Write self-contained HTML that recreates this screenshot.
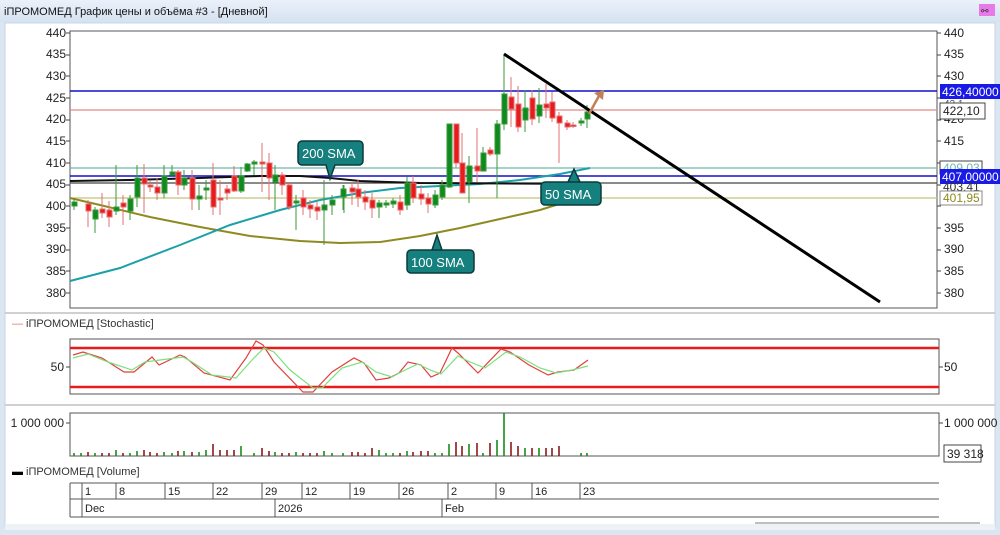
<!DOCTYPE html>
<html><head><meta charset="utf-8"><style>
html,body{margin:0;padding:0;width:1000px;height:535px;overflow:hidden;background:#fff;font-family:"Liberation Sans","Noto Sans CJK SC",sans-serif}
svg{display:block}
text{font-family:"Liberation Sans","Noto Sans CJK SC",sans-serif}
</style></head><body>
<svg width="1000" height="535" viewBox="0 0 1000 535">
<defs><linearGradient id="tb" x1="0" y1="0" x2="0" y2="1"><stop offset="0" stop-color="#eaf1fa"/><stop offset="1" stop-color="#d5e2f1"/></linearGradient></defs>
<rect x="0" y="0" width="1000" height="535" fill="#dbe6f3"/>
<rect x="0" y="0" width="1000" height="22" fill="url(#tb)"/>
<text x="4" y="15" font-size="11" fill="#111">iПРОМОМЕД График цены и объёма #3 - [Дневной]</text>
<rect x="979" y="4" width="16" height="12" fill="#e879e8"/>
<text x="981" y="14" font-size="9" fill="#333">⚯</text>
<rect x="5" y="23" width="990" height="503" fill="#fff" stroke="#c8d4e2"/>
<rect x="5" y="524" width="990" height="6" fill="#eef2f7"/>
<line x1="755" y1="523" x2="980" y2="523" stroke="#aaa" stroke-width="1.5"/>
<line x1="5" y1="313" x2="995" y2="313" stroke="#d0d0d0" stroke-width="2"/>
<line x1="5" y1="405" x2="995" y2="405" stroke="#d0d0d0" stroke-width="2"/>

<rect x="70" y="31" width="867" height="277" fill="#fff" stroke="#555"/>
<g font-size="12" fill="#222" text-anchor="end">
<text x="66" y="37">440</text><text x="66" y="58">435</text><text x="66" y="80">430</text><text x="66" y="102">425</text><text x="66" y="123">420</text><text x="66" y="145">415</text><text x="66" y="167">410</text><text x="66" y="188">405</text><text x="66" y="210">400</text><text x="66" y="232">395</text><text x="66" y="253">390</text><text x="66" y="275">385</text><text x="66" y="297">380</text>
</g>
<g stroke="#444">
<path d="M66,33H70M66,55H70M66,76H70M66,98H70M66,120H70M66,141H70M66,163H70M66,185H70M66,206H70M66,228H70M66,250H70M66,271H70M66,293H70"/>
<path d="M937,33H941M937,55H941M937,76H941M937,98H941M937,120H941M937,141H941M937,163H941M937,185H941M937,206H941M937,228H941M937,250H941M937,271H941M937,293H941"/>
</g>
<g font-size="12" fill="#222">
<text x="944" y="37">440</text><text x="944" y="58">435</text><text x="944" y="80">430</text><text x="944" y="123">420</text><text x="944" y="145">415</text><text x="944" y="232">395</text><text x="944" y="253">390</text><text x="944" y="275">385</text><text x="944" y="297">380</text>
</g>

<line x1="70" y1="110" x2="937" y2="110" stroke="#e08a8a" stroke-width="1.2"/>
<line x1="70" y1="168" x2="937" y2="168" stroke="#6fb8aa" stroke-width="1.2"/>
<line x1="70" y1="183" x2="937" y2="183" stroke="#444" stroke-width="1.2"/>
<line x1="70" y1="198" x2="937" y2="198" stroke="#c2c27a" stroke-width="1.2"/>
<line x1="70" y1="91" x2="937" y2="91" stroke="#1010c8" stroke-width="1.6"/>
<line x1="70" y1="176" x2="937" y2="176" stroke="#1010c8" stroke-width="1.6"/>

<path d="M70,198 L100,205 L150,217 L200,227 L250,236 L300,241 L340,243 L380,242 L420,236 L460,228 L500,219 L540,210 L575,199" fill="none" stroke="#8f8a20" stroke-width="2"/>
<path d="M70,281 L120,268 L180,245 L230,225 L280,210 L320,200 L360,193 L400,188 L440,186 L480,184 L520,180 L560,174 L590,168" fill="none" stroke="#1ba0a8" stroke-width="2"/>
<path d="M70,181 L130,180 L200,178 L260,176 L300,176 L330,178 L360,181 L420,183 L600,184" fill="none" stroke="#111" stroke-width="2"/>

<g stroke-width="1">
<g stroke="#3a9a3a" fill="#0f8a1f">
<path d="M74,198V210M95,207V233M116,165V215M130,195V220M137,165V207M164,165V198M172,165V175M184,170V190M199,185V210M206,180V200M241,167V193M247,163V172M254,160V175M275,165V210M296,195V230M324,180V245M332,195V215M343,185V210M344,185V213M379,200V218M386,200V208M393,198V208M407,177V210M435,190V208M442,180V200M449,124V188M469,156V203M483,147V171M497,120V198M504,54V130M525,90V132M539,88V123M581,118V126M587,105V128"/>
<rect x="72" y="202" width="5" height="4"/><rect x="93" y="210" width="5" height="9"/><rect x="114" y="207" width="5" height="4"/><rect x="128" y="199" width="5" height="12"/><rect x="135" y="178" width="5" height="19"/><rect x="162" y="176" width="5" height="17"/><rect x="170" y="172" width="5" height="3"/><rect x="182" y="178" width="5" height="7"/><rect x="197" y="196" width="5" height="3"/><rect x="204" y="188" width="5" height="2"/><rect x="239" y="176" width="5" height="15"/><rect x="245" y="164" width="5" height="7"/><rect x="252" y="162" width="5" height="2"/><rect x="273" y="175" width="5" height="7"/><rect x="294" y="201" width="5" height="2"/><rect x="322" y="205" width="5" height="5"/><rect x="330" y="200" width="5" height="5"/><rect x="341" y="189" width="5" height="8"/><rect x="377" y="203" width="5" height="4"/><rect x="384" y="203" width="5" height="2"/><rect x="391" y="201" width="5" height="3"/><rect x="405" y="183" width="5" height="22"/><rect x="433" y="195" width="5" height="10"/><rect x="440" y="185" width="5" height="12"/><rect x="447" y="124" width="5" height="63"/><rect x="467" y="166" width="5" height="16"/><rect x="481" y="153" width="5" height="18"/><rect x="495" y="124" width="5" height="30"/><rect x="502" y="94" width="5" height="30"/><rect x="523" y="108" width="5" height="12"/><rect x="537" y="105" width="5" height="11"/><rect x="579" y="121" width="5" height="2"/><rect x="585" y="112" width="5" height="7"/>
</g>
<g stroke="#e07070" fill="#e81c1c">
<path d="M88,200V227M102,193V218M109,201V227M123,195V225M144,164V213M150,180V192M157,178V200M178,170V195M192,170V210M213,163V215M220,180V215M227,185V200M234,166V192M262,143V192M269,153V200M282,172V195M289,183V210M303,190V215M310,200V218M317,202V220M352,182V205M358,180V207M365,190V210M372,193V218M400,195V215M413,176V203M421,185V205M428,193V213M456,124V168M462,133V193M477,128V182M490,147V156M511,77V127M518,86V132M532,90V125M546,84V118M552,92V122M559,112V163M567,120V130M573,122V128"/>
<rect x="86" y="204" width="5" height="7"/><rect x="100" y="209" width="5" height="4"/><rect x="107" y="210" width="5" height="7"/><rect x="121" y="203" width="5" height="4"/><rect x="142" y="178" width="5" height="6"/><rect x="148" y="185" width="5" height="2"/><rect x="155" y="187" width="5" height="6"/><rect x="176" y="172" width="5" height="13"/><rect x="190" y="178" width="5" height="21"/><rect x="211" y="180" width="5" height="27"/><rect x="218" y="198" width="5" height="2"/><rect x="225" y="189" width="5" height="4"/><rect x="232" y="176" width="5" height="15"/><rect x="260" y="162" width="5" height="2"/><rect x="267" y="163" width="5" height="15"/><rect x="280" y="175" width="5" height="10"/><rect x="287" y="185" width="5" height="22"/><rect x="301" y="198" width="5" height="9"/><rect x="308" y="205" width="5" height="4"/><rect x="315" y="207" width="5" height="4"/><rect x="350" y="188" width="5" height="4"/><rect x="356" y="189" width="5" height="8"/><rect x="363" y="197" width="5" height="5"/><rect x="370" y="200" width="5" height="8"/><rect x="398" y="202" width="5" height="8"/><rect x="411" y="183" width="5" height="15"/><rect x="419" y="194" width="5" height="5"/><rect x="426" y="198" width="5" height="6"/><rect x="454" y="124" width="5" height="39"/><rect x="460" y="163" width="5" height="30"/><rect x="475" y="166" width="5" height="5"/><rect x="488" y="150" width="5" height="4"/><rect x="509" y="97" width="5" height="12"/><rect x="516" y="104" width="5" height="23"/><rect x="530" y="98" width="5" height="21"/><rect x="544" y="104" width="5" height="4"/><rect x="550" y="102" width="5" height="16"/><rect x="557" y="116" width="5" height="7"/><rect x="565" y="123" width="5" height="4"/><rect x="571" y="125" width="5" height="1.5"/>
</g>
</g>

<line x1="504" y1="54" x2="880" y2="302" stroke="#000" stroke-width="3"/>
<path d="M589,114 L600,94" stroke="#c0805a" stroke-width="2.5" fill="none"/>
<path d="M594,93 L604,90 L603,100 Z" fill="#c0805a"/>

<g font-size="13" fill="#fff">
<path d="M302,141 H359 a4,4 0 0 1 4,4 V161 a4,4 0 0 1 -4,4 H335 L330,179 L326,165 H302 a4,4 0 0 1 -4,-4 V145 a4,4 0 0 1 4,-4Z" fill="#16807e" stroke="#0b3b3b" stroke-width="1.5"/>
<text x="302" y="158">200 SMA</text>
<path d="M411,250 H470 a4,4 0 0 1 4,4 V269 a4,4 0 0 1 -4,4 H411 a4,4 0 0 1 -4,-4 V254 a4,4 0 0 1 4,-4 H432 L437,235 L442,250Z" fill="#16807e" stroke="#0b3b3b" stroke-width="1.5"/>
<text x="411" y="267">100 SMA</text>
<path d="M545,182 H597 a4,4 0 0 1 4,4 V201 a4,4 0 0 1 -4,4 H545 a4,4 0 0 1 -4,-4 V186 a4,4 0 0 1 4,-4 H568 L574,169 L580,182Z" fill="#16807e" stroke="#0b3b3b" stroke-width="1.5"/>
<text x="545" y="199">50 SMA</text>
</g>

<g font-size="12">
<rect x="940" y="84" width="60" height="15" fill="#1a1ae6"/><text x="942" y="96" fill="#fff">426,40000</text>
<text x="944" y="107" fill="#555" font-size="10">42 1</text>
<rect x="940" y="103" width="45" height="16" fill="#fff" stroke="#444"/><text x="943" y="115" fill="#222">422,10</text>
<rect x="940" y="161" width="42" height="13" fill="#fff" stroke="#444"/><text x="943" y="172" fill="#6fb8aa">409,03</text>
<rect x="940" y="169" width="60" height="15" fill="#1a1ae6"/><text x="942" y="181" fill="#fff">407,00000</text>
<text x="943" y="191" fill="#333">403,41</text>
<rect x="940" y="191" width="42" height="14" fill="#fff" stroke="#888"/><text x="943" y="202" fill="#8f8a20">401,95</text>
</g>

<text x="12" y="327" font-size="11" fill="#333"><tspan fill="#e07070">—</tspan> iПРОМОМЕД [Stochastic]</text>
<rect x="70" y="339" width="869" height="55" fill="#fff" stroke="#555"/>
<line x1="70" y1="348" x2="939" y2="348" stroke="#e81c1c" stroke-width="2.5"/>
<line x1="70" y1="387" x2="939" y2="387" stroke="#e81c1c" stroke-width="2.5"/>
<path d="M66,367H70M939,367H943" stroke="#444"/>
<text x="64" y="371" font-size="12" fill="#222" text-anchor="end">50</text>
<text x="944" y="371" font-size="12" fill="#222">50</text>
<path d="M73,355 L83,352 L102,358 L124,372 L134,372 L152,357 L159,365 L180,355 L185,357 L204,373 L230,380 L246,358 L256,341 L263,345 L274,362 L303,392 L313,392 L332,372 L354,358 L364,363 L376,380 L389,378 L399,373 L408,362 L421,365 L431,377 L440,373 L452,348 L458,353 L478,373 L501,349 L510,352 L529,365 L548,375 L558,372 L574,370 L588,360" fill="none" stroke="#e04040" stroke-width="1.2"/>
<path d="M73,358 L88,354 L108,362 L132,370 L145,362 L160,360 L183,357 L192,362 L212,375 L236,378 L252,360 L264,348 L274,352 L290,370 L313,388 L322,388 L342,368 L362,362 L376,372 L392,377 L405,370 L418,364 L430,370 L441,374 L458,356 L470,362 L485,368 L506,352 L520,357 L540,368 L556,373 L572,370 L588,366" fill="none" stroke="#7ce07c" stroke-width="1.2"/>

<rect x="70" y="413" width="869" height="43" fill="#fff" stroke="#555"/>
<path d="M66,423H70M939,423H943" stroke="#444"/>
<text x="64" y="427" font-size="12" fill="#222" text-anchor="end">1 000 000</text>
<text x="944" y="427" font-size="12" fill="#222">1 000 000</text>
<rect x="944" y="445" width="37" height="17" fill="#fff" stroke="#444"/>
<text x="947" y="458" font-size="12" fill="#222">39 318</text>
<g stroke-width="1.6">
<path stroke="#1a8a1a" d="M74,456v-3M81,456v-3M95,456v-3M116,456v-6M130,456v-3M137,456v-5M164,456v-4M172,456v-3M184,456v-5M199,456v-4M206,456v-6M241,456v-10M254,456v-3M275,456v-4M296,456v-4M324,456v-5M332,456v-3M343,456v-3M379,456v-6M386,456v-3M393,456v-3M407,456v-5M435,456v-3M442,456v-3M449,456v-12M469,456v-12M483,456v-3M497,456v-16M504,456v-43M525,456v-8M539,456v-8M581,456v-3M587,456v-3"/>
<path stroke="#8b1a1a" d="M88,456v-4M102,456v-3M109,456v-3M123,456v-3M144,456v-6M150,456v-4M157,456v-3M178,456v-5M192,456v-4M213,456v-12M220,456v-6M227,456v-6M234,456v-6M262,456v-8M269,456v-5M282,456v-3M289,456v-3M303,456v-3M310,456v-3M317,456v-3M352,456v-4M358,456v-4M365,456v-3M372,456v-8M400,456v-3M413,456v-4M421,456v-5M428,456v-5M456,456v-14M462,456v-10M477,456v-13M490,456v-13M511,456v-14M518,456v-10M532,456v-8M546,456v-8M552,456v-8M559,456v-10"/>
</g>
<text x="12" y="475" font-size="11" fill="#333"><tspan font-weight="bold" fill="#000">▬</tspan> iПРОМОМЕД [Volume]</text>

<g stroke="#555" fill="none">
<line x1="70" y1="483" x2="939" y2="483"/>
<line x1="70" y1="499" x2="939" y2="499"/>
<line x1="70" y1="517" x2="939" y2="517"/>
<line x1="70" y1="483" x2="70" y2="517"/>
<path d="M82,483V517M116,483V499M165,483V499M213,483V499M262,483V499M302,483V499M350,483V499M399,483V499M448,483V499M496,483V499M532,483V499M580,483V499M275,499V517M442,499V517"/>
</g>
<g font-size="11" fill="#222">
<text x="85" y="495">1</text><text x="119" y="495">8</text><text x="168" y="495">15</text><text x="216" y="495">22</text><text x="265" y="495">29</text><text x="305" y="495">12</text><text x="353" y="495">19</text><text x="402" y="495">26</text><text x="451" y="495">2</text><text x="499" y="495">9</text><text x="535" y="495">16</text><text x="583" y="495">23</text>
<text x="85" y="512">Dec</text><text x="278" y="512">2026</text><text x="445" y="512">Feb</text>
</g>
</svg>
</body></html>
